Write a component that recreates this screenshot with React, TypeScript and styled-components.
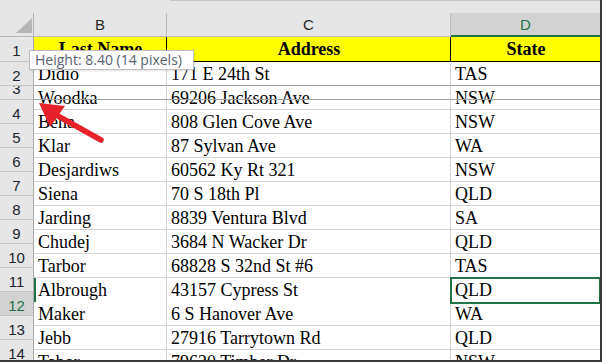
import React from "react";
import styled, { createGlobalStyle } from "styled-components";

const GlobalStyle = createGlobalStyle`
  html, body { margin: 0; padding: 0; background: #ffffff; }
  body { overflow: hidden; }
`;

const GREEN = "#217346";

const Sheet = styled.div`
  position: relative;
  width: 602px;
  height: 362px;
  box-sizing: border-box;
  border-right: 2px solid #3a3a3a;
  border-bottom: 2px solid #3a3a3a;
  overflow: hidden;
  background: #ffffff;
  display: flex;
  flex-direction: column;
`;

const HeaderBand = styled.div`
  flex: none;
  display: flex;
  height: 37px;
  background: linear-gradient(#c6c6c6, #c6c6c6) 170px 0 / 100% 1px no-repeat, #e6e6e6;
`;

const Corner = styled.div`
  align-self: flex-end;
  width: 34px;
  height: 24px;
  box-sizing: border-box;
  border-right: 1px solid #b4b4b4;
  border-bottom: 1px solid #b4b4b4;
  display: flex;
`;

const ColHead = styled.div<{ $w?: number; $active?: boolean; $last?: boolean }>`
  align-self: flex-end;
  ${(p) => (p.$w ? `width: ${p.$w}px; flex: none;` : "flex: 1;")}
  height: 24px;
  box-sizing: border-box;
  border-right: ${(p) => (p.$last ? "none" : "1px solid #bcbcbc")};
  border-bottom: ${(p) => (p.$active ? `2px solid ${GREEN}` : "1px solid #bcbcbc")};
  background: ${(p) => (p.$active ? "#d2d2d2" : "transparent")};
  color: ${(p) => (p.$active ? GREEN : "#262626")};
  font-family: "Liberation Sans", Arial, sans-serif;
  font-size: 15px;
  display: flex;
  align-items: center;
  justify-content: center;
  padding-top: ${(p) => (p.$active ? "1px" : "0")};
`;

const Body = styled.div`
  flex: 1;
  min-height: 0;
  display: flex;
`;

const RowHeads = styled.div`
  flex: none;
  width: 34px;
  display: flex;
  flex-direction: column;
  background: #e6e6e6;
`;

const RowHead = styled.div<{ $h: number; $active?: boolean; $compact?: boolean }>`
  flex: none;
  height: ${(p) => p.$h}px;
  box-sizing: border-box;
  border-bottom: 1px solid #c4c4c4;
  border-right: 1px solid #ababab;
  background: ${(p) => (p.$active ? "#d2d2d2" : "#e6e6e6")};
  color: ${(p) => (p.$active ? GREEN : "#202430")};
  font-family: "Liberation Sans", Arial, sans-serif;
  font-size: 15px;
  display: flex;
  justify-content: center;
  align-items: ${(p) => (p.$compact ? "flex-start" : "center")};
  padding-top: ${(p) => (p.$compact ? "0" : "3px")};
  overflow: hidden;
`;

const RowLabel = styled.span<{ $compact?: boolean }>`
  line-height: ${(p) => (p.$compact ? "15px" : "normal")};
  margin-top: ${(p) => (p.$compact ? "-5px" : "0")};
`;

const Grid = styled.div`
  flex: 1;
  display: flex;
  flex-direction: column;
`;

const CellRow = styled.div<{ $h: number }>`
  flex: none;
  height: ${(p) => p.$h}px;
  display: grid;
  grid-template-columns: 133px 284px 1fr;
`;

const Cell = styled.div<{
  $head?: boolean;
  $strong?: boolean;
  $last?: boolean;
  $selected?: boolean;
  $marked?: boolean;
}>`
  position: relative;
  box-sizing: border-box;
  border-right: ${(p) => (p.$last ? "none" : p.$head ? "1px solid #000000" : "1px solid #d4d4d4")};
  border-bottom: ${(p) =>
    p.$head ? "1px solid #000000" : p.$strong ? "1px solid #a2a2a2" : "1px solid #d4d4d4"};
  background: ${(p) => (p.$head ? "#ffff00" : "#ffffff")};
  font-family: "Liberation Serif", "Times New Roman", serif;
  font-size: 18px;
  font-weight: ${(p) => (p.$head ? 700 : 400)};
  text-align: ${(p) => (p.$head ? "center" : "left")};
  color: #000000;
  line-height: 23px;
  padding: 1px 3px 0 4px;
  white-space: nowrap;
  overflow: hidden;
  ${(p) => (p.$marked ? `box-shadow: inset 2px 0 0 ${GREEN};` : "")}
  ${(p) =>
    p.$selected
      ? `outline: 2px solid ${GREEN}; outline-offset: -1px; z-index: 1; overflow: visible;`
      : ""}
`;

const DragLine = styled.div`
  position: absolute;
  left: 34px;
  right: 0;
  top: 99px;
  height: 1px;
  background: #a2a2a2;
  pointer-events: none;
`;

const Tooltip = styled.div`
  position: absolute;
  left: 29px;
  top: 50px;
  height: 20px;
  box-sizing: border-box;
  padding: 0 11px 0 5px;
  border: 1px solid #bdbdbd;
  background: #ffffff;
  box-shadow: 1px 1px 2px rgba(0, 0, 0, 0.12);
  font-family: "Open Sans", "Noto Sans", sans-serif;
  font-size: 14px;
  line-height: 18px;
  color: #56626e;
  white-space: nowrap;
  z-index: 3;
`;

const ArrowLayer = styled.svg`
  position: absolute;
  left: 0;
  top: 0;
  pointer-events: none;
  z-index: 4;
`;

type Row = { name: string; address: string; state: string };

const rows: Row[] = [
  { name: "Didio", address: "171 E 24th St", state: "TAS" },
  { name: "Woodka", address: "69206 Jackson Ave", state: "NSW" },
  { name: "Bena", address: "808 Glen Cove Ave", state: "NSW" },
  { name: "Klar", address: "87 Sylvan Ave", state: "WA" },
  { name: "Desjardiws", address: "60562 Ky Rt 321", state: "NSW" },
  { name: "Siena", address: "70 S 18th Pl", state: "QLD" },
  { name: "Jarding", address: "8839 Ventura Blvd", state: "SA" },
  { name: "Chudej", address: "3684 N Wacker Dr", state: "QLD" },
  { name: "Tarbor", address: "68828 S 32nd St #6", state: "TAS" },
  { name: "Albrough", address: "43157 Cypress St", state: "QLD" },
  { name: "Maker", address: "6 S Hanover Ave", state: "WA" },
  { name: "Jebb", address: "27916 Tarrytown Rd", state: "QLD" },
  { name: "Tabor", address: "79620 Timber Dr", state: "NSW" },
];

const headerRowHeights = [25, 24, 14, 24, 24, 24, 24, 24, 24, 24, 24, 24, 24, 24];

export default function App() {
  return (
    <>
      <GlobalStyle />
      <Sheet>
        <HeaderBand>
          <Corner>
            <svg width="33" height="23" viewBox="0 0 33 23">
              <polygon points="16,20 32,5 32,20" fill="#b5b5b5" />
            </svg>
          </Corner>
          <ColHead $w={133}>B</ColHead>
          <ColHead $w={284}>C</ColHead>
          <ColHead $active $last>
            D
          </ColHead>
        </HeaderBand>
        <Body>
          <RowHeads>
            {headerRowHeights.map((h, i) => (
              <RowHead key={i} $h={h} $active={i + 1 === 12} $compact={h < 20}>
                <RowLabel $compact={h < 20}>{i + 1}</RowLabel>
              </RowHead>
            ))}
          </RowHeads>
          <Grid>
            <CellRow $h={25}>
              <Cell $head>Last Name</Cell>
              <Cell $head>Address</Cell>
              <Cell $head $last>
                State
              </Cell>
            </CellRow>
            {rows.map((r, i) => {
              const rowNo = i + 2;
              return (
                <CellRow key={r.name} $h={24}>
                  <Cell $strong={rowNo === 2} $marked={rowNo === 11}>
                    {r.name}
                  </Cell>
                  <Cell $strong={rowNo === 2}>{r.address}</Cell>
                  <Cell $strong={rowNo === 2} $last $selected={rowNo === 11}>
                    {r.state}
                  </Cell>
                </CellRow>
              );
            })}
          </Grid>
        </Body>
        <DragLine />
        <Tooltip>Height: 8.40 (14 pixels)</Tooltip>
        <ArrowLayer width="602" height="362" viewBox="0 0 602 362">
          <line
            x1="101"
            y1="140"
            x2="58"
            y2="116"
            stroke="#e6232b"
            strokeWidth="5.5"
            strokeLinecap="round"
          />
          <polygon points="39,103 65,106 50,127" fill="#e6232b" />
        </ArrowLayer>
      </Sheet>
    </>
  );
}
